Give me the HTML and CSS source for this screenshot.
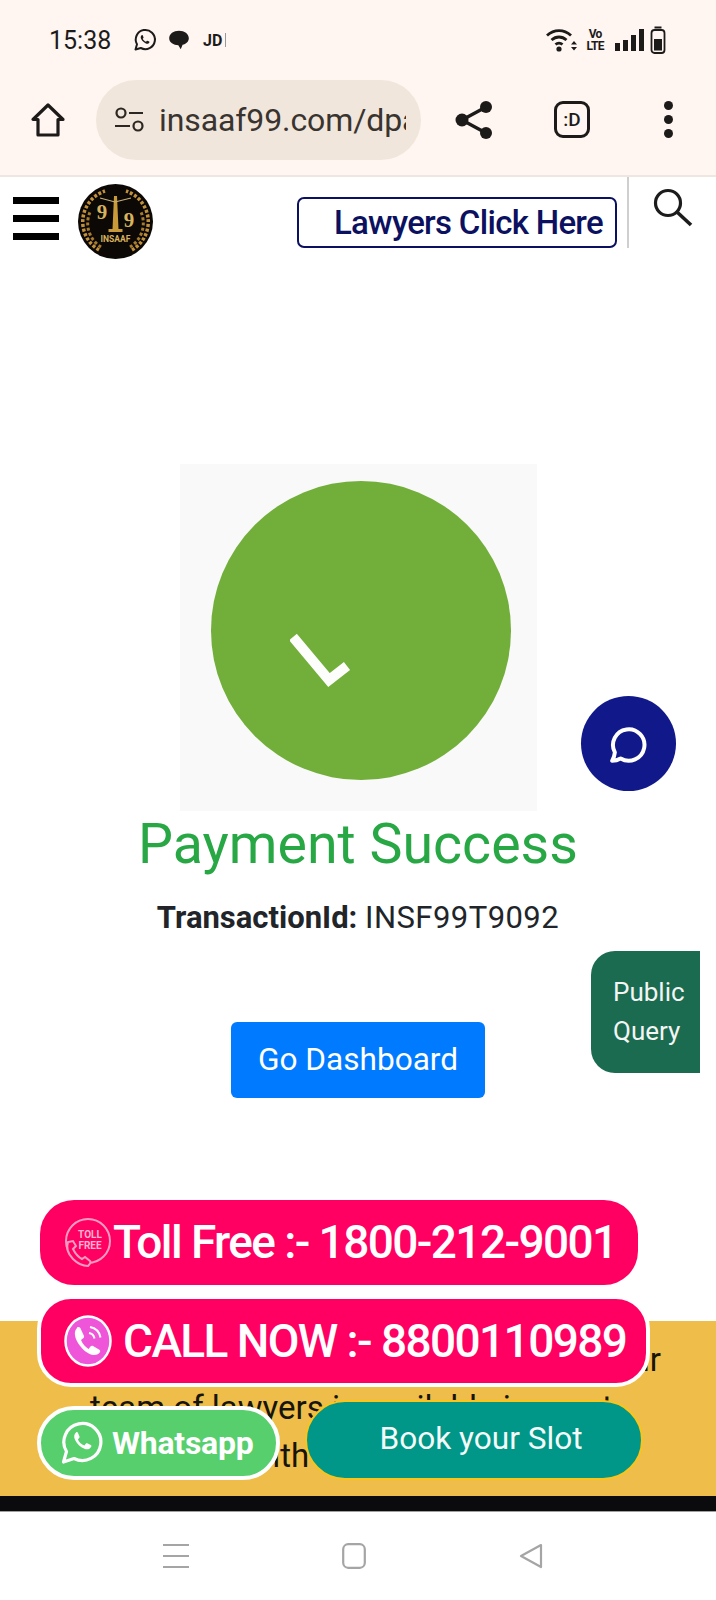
FILE: index.html
```html
<!DOCTYPE html>
<html>

<head>
    <title>Payment Success</title>
    <link rel="stylesheet" href="styles.css">
</head>

<body>
    <div class="screen">
        <div class="status-bar">
            <span class="status-time">15:38</span>
            <svg class="status-app" width="24" height="24" viewBox="0 0 24 24">
                <path d="M2.500 21.500l1.500-5.200A9.600 9.600 0 1 1 7.800 20z" fill="none" stroke="#1d1b1a" stroke-width="2" stroke-linejoin="round" />
                <path d="M8.600 7.200c-1 .9-1.200 2.200-.4 3.900 1 2 2.500 3.500 4.700 4.400 1.500.6 2.800.2 3.500-1 .2-.4.1-.7-.2-.9l-1.800-.9c-.3-.1-.5 0-.7.2l-.7.9c-1.500-.6-2.600-1.700-3.300-3.100l.7-.8c.2-.2.2-.5.1-.7l-.8-1.900c-.2-.4-.6-.4-1-.1z" fill="#1d1b1a" />
            </svg>
            <svg class="status-app" width="24" height="24" viewBox="0 0 22 22">
                <path d="M11 2.500c5 0 9 2.900 9 6.800 0 3.100-2.600 5.400-5.700 6.100l-1.700 4.100-2.200-3.800C6 15.500 2 13.300 2 9.300c0-3.900 4-6.800 9-6.800z" fill="#1d1b1a" />
            </svg>
            <span class="status-jd">JD</span>
            <span class="status-sep"></span>
            <div class="status-right">
                <svg class="status-wifi" width="36" height="26" viewBox="0 0 36 26">
                    <path d="M2 8.500c7-6.500 17-6.500 24 0M6.500 13c4.500-4 10.500-4 15 0M10.500 17.500c2-1.800 5-1.800 7 0" fill="none" stroke="#1d1b1a" stroke-width="2.800" />
                    <circle cx="14" cy="22" r="2.600" fill="#1d1b1a" />
                    <path d="M29 14l3 3.500h-6zM26 20h6l-3 3.500z" fill="#1d1b1a" />
                </svg>
                <span class="status-volte">Vo<br>LTE</span>
                <div class="signal">
                    <span class="signal-bar signal-1"></span>
                    <span class="signal-bar signal-2"></span>
                    <span class="signal-bar signal-3"></span>
                    <span class="signal-bar signal-4"></span>
                </div>
                <svg class="status-battery" width="16" height="28" viewBox="0 0 15 28">
                    <rect x="4" y="0.500" width="7" height="2" fill="#1d1b1a" />
                    <rect x="1" y="4" width="13" height="23" rx="3" fill="none" stroke="#1d1b1a" stroke-width="1.800" />
                    <rect x="3.500" y="13" width="8" height="11.500" fill="#1d1b1a" />
                </svg>
            </div>
        </div>

        <div class="toolbar">
            <svg class="toolbar-home" width="36" height="36" viewBox="0 0 36 36">
                <path d="M18 3L3 17.500h5V33h20V17.500h5z" fill="none" stroke="#1d1b1a" stroke-width="3.200" stroke-linejoin="round" />
            </svg>
            <div class="url-pill">
                <svg width="30" height="26" viewBox="0 0 30 26">
                    <circle cx="7" cy="6" r="4.500" fill="none" stroke="#2b2723" stroke-width="2.200" />
                    <path d="M15 6h14M1 19h15" stroke="#2b2723" stroke-width="2.200" />
                    <circle cx="24" cy="19" r="4.500" fill="none" stroke="#2b2723" stroke-width="2.200" />
                </svg>
                <span class="url-text">insaaf99.com/dpa</span>
            </div>
            <svg class="toolbar-share" width="38" height="40" viewBox="0 0 38 40">
                <path d="M31 7L7 20l24 13" fill="none" stroke="#1d1b1a" stroke-width="3.400" />
                <circle cx="31" cy="7" r="6" fill="#1d1b1a" />
                <circle cx="7" cy="20" r="6.500" fill="#1d1b1a" />
                <circle cx="31" cy="33" r="6" fill="#1d1b1a" />
            </svg>
            <div class="tab-badge">:D</div>
            <div class="toolbar-dots">
                <span class="toolbar-dot"></span>
                <span class="toolbar-dot"></span>
                <span class="toolbar-dot"></span>
            </div>
        </div>

        <div class="site-header">
            <div class="burger">
                <span class="burger-line"></span>
                <span class="burger-line"></span>
                <span class="burger-line"></span>
            </div>
            <svg class="logo" width="75" height="75" viewBox="0 0 75 75">
                <circle cx="37.500" cy="37.500" r="37.500" fill="#0b0806" />
                <path d="M21 66A32.500 32.500 0 0 1 27 7" fill="none" stroke="#c0913a" stroke-width="3.500" stroke-dasharray="3 1.800" />
                <path d="M54 66A32.500 32.500 0 0 0 48 7" fill="none" stroke="#c0913a" stroke-width="3.500" stroke-dasharray="3 1.800" />
                <path d="M23 63A28 28 0 0 1 12 28" fill="none" stroke="#a87c2c" stroke-width="3" stroke-dasharray="3 2.200" />
                <path d="M52 63A28 28 0 0 0 63 28" fill="none" stroke="#a87c2c" stroke-width="3" stroke-dasharray="3 2.200" />
                <path d="M36 12h3l1.500 33h4v3h-14v-3h4z" fill="#c99a3a" />
                <path d="M22 14l15 4 16-4" fill="none" stroke="#c9b27a" stroke-width="1.200" />
                <text class="logo-nine" x="24" y="35">9</text>
                <text class="logo-nine" x="51" y="43">9</text>
                <text class="logo-name" x="37.500" y="58">INSAAF</text>
            </svg>
            <a class="lawyers-button">Lawyers Click Here</a>
            <span class="header-divider"></span>
            <svg class="search-icon" width="42" height="40" viewBox="0 0 42 40">
                <circle cx="16" cy="15" r="12.500" fill="none" stroke="#1c1c1c" stroke-width="3.200" />
                <path d="M25 24l14 13" stroke="#1c1c1c" stroke-width="3.600" />
            </svg>
        </div>

        <main class="content">
            <div class="success-image">
                <div class="success-circle">
                    <svg width="62" height="56" viewBox="0 0 62 56">
                        <path d="M3 3l36 43 18-14" fill="none" stroke="#fdfdfb" stroke-width="10" />
                    </svg>
                </div>
            </div>
            <h1 class="success-title">Payment Success</h1>
            <p class="transaction"><b class="transaction-label">TransactionId:</b> <span class="transaction-id">INSF99T9092</span></p>
            <a class="dashboard-button">Go Dashboard</a>
        </main>

        <footer class="footer-band">
            <p class="footer-line footer-line-first">Get in touch with us now and talk to our</p>
            <p class="footer-line footer-line-second">team of lawyers is available in most</p>
            <p class="footer-line footer-line-third">Connect with our legal team now</p>
        </footer>
        <div class="footer-black"></div>

        <nav class="nav-bar">
            <svg width="26" height="26" viewBox="0 0 26 26">
                <path d="M0 2h26M0 13h26M0 24h26" stroke="#a5a5a5" stroke-width="2.200" />
            </svg>
            <svg width="24" height="26" viewBox="0 0 24 26">
                <rect x="1.200" y="1.200" width="21.600" height="23.600" rx="5" fill="none" stroke="#a5a5a5" stroke-width="2.200" />
            </svg>
            <svg width="24" height="26" viewBox="0 0 24 26">
                <path d="M22 2L2 13l20 11z" fill="none" stroke="#a5a5a5" stroke-width="2.200" stroke-linejoin="round" />
            </svg>
        </nav>

        <a class="chat-button">
            <svg width="44" height="44" viewBox="0 0 42 42">
                <path d="M5 37c2 0 5-.5 8-2.200A15 15 0 1 0 7.500 29c-.2 2.500-1 5-2.500 8z" fill="none" stroke="#fff" stroke-width="3.800" stroke-linejoin="round" />
            </svg>
        </a>

        <a class="public-query">Public<br>Query</a>

        <div class="call-stack">
            <a class="call-pill toll-pill">
                <svg class="pill-icon" width="48" height="52" viewBox="0 0 48 52">
                    <circle cx="25" cy="25" r="22" fill="none" stroke="#ff9cc0" stroke-width="2" />
                    <text class="toll-icon-text" x="27" y="22">TOLL</text>
                    <text class="toll-icon-text" x="27" y="33">FREE</text>
                    <path d="M5 26c-2 6 0 12 5 17s10 7 15 7c2-2 3-4 2-5l-5-4-3 2c-4-2-7-6-9-10l3-3-3-5z" fill="#ff0062" stroke="#ff9cc0" stroke-width="2" />
                </svg>
                <span class="toll-text">Toll Free :- 1800-212-9001</span>
            </a>
            <a class="call-pill now-pill">
                <svg class="pill-icon" width="48" height="52" viewBox="0 0 48 52">
                    <ellipse cx="24" cy="26" rx="22.500" ry="24.500" fill="#ee55d8" stroke="#fff" stroke-width="2.500" />
                    <path d="M13 13c-3 3-3 8 1 15 4 6 9 11 15 12 3 .5 6-1 7-3 .5-1 0-2-1-2.500l-6-3.500c-1-.5-2-.3-2.500.5l-2 2.500c-3-2-6-5-7.500-9l2.500-2c.7-.7.8-1.700.3-2.500l-3.500-7.500c-.7-1-2-1.200-3.300-.5z" fill="#fff" />
                    <path d="M25 18c3 .5 5 2.500 5.500 5.500M26 12c5.500 1 9.500 5 10.500 10.500" fill="none" stroke="#fff" stroke-width="2" />
                </svg>
                <span class="now-text">CALL NOW :- 8800110989</span>
            </a>
            <div class="action-row">
                <a class="whatsapp-pill">
                    <svg class="pill-icon" width="42" height="44" viewBox="0 0 42 44">
                        <path d="M2.500 41l3-10.500A18.500 18.500 0 1 1 13 37.500z" fill="none" stroke="#fff" stroke-width="3.200" stroke-linejoin="round" />
                        <path d="M15 11.500c-2 1.800-2.400 4.300-.9 7.500 2 4 5 7 9.300 8.800 3 1.200 5.500.4 6.800-2 .4-.7.200-1.300-.4-1.700l-3.600-1.800c-.6-.2-1-.1-1.400.4l-1.400 1.800c-3-1.200-5.200-3.300-6.500-6.100l1.400-1.600c.4-.4.4-1 .2-1.400l-1.600-3.700c-.4-.8-1.200-.8-1.900-.2z" fill="#fff" />
                    </svg>
                    <span class="whatsapp-text">Whatsapp</span>
                </a>
                <a class="book-pill">Book your Slot</a>
            </div>
        </div>
    </div>
</body>

</html>
```

FILE: styles.css
```css
:root {
    --pill-pink: #ff0062;
    --chrome-bg: #fff6f2;
    --chrome-ink: #1d1b1a;
}

* {
    box-sizing: border-box;
}

body {
    margin: 0;
    font-family: Roboto, "Liberation Sans", sans-serif;
    background: #fff;
}

p {
    margin: 0;
}

.screen {
    position: relative;
    width: 716px;
    height: 1600px;
    overflow: hidden;
}

/* phone status bar */

.status-bar {
    display: flex;
    align-items: center;
    height: 66px;
    padding: 14px 50px 0 49px;
    background: var(--chrome-bg);
    color: var(--chrome-ink);
}

.status-time {
    font-size: 25px;
    width: 84px;
}

.status-app {
    margin-right: 10px;
}

.status-jd {
    font-size: 16px;
    font-weight: 700;
    margin-left: 2px;
}

.status-sep {
    width: 1px;
    height: 14px;
    margin-left: 3px;
    background: #999;
}

.status-right {
    display: flex;
    align-items: center;
    gap: 9px;
    margin-left: auto;
}

.status-wifi {
    margin-right: -4px;
}

.status-volte {
    font-size: 12px;
    font-weight: 700;
    line-height: 12px;
    letter-spacing: -.6px;
    text-align: center;
}

.signal {
    display: flex;
    align-items: flex-end;
    gap: 3px;
    height: 22px;
    margin-left: 2px;
}

.signal-bar {
    width: 5px;
    background: var(--chrome-ink);
}

.signal-1 {
    height: 8px;
}

.signal-2 {
    height: 11px;
}

.signal-3 {
    height: 16px;
}

.signal-4 {
    height: 22px;
}

.status-battery {
    margin-left: -3px;
}

/* browser toolbar */

.toolbar {
    display: flex;
    align-items: center;
    height: 111px;
    padding: 0 0 2px 30px;
    background: var(--chrome-bg);
    border-bottom: 2px solid #efe6e0;
}

.toolbar-home {
    flex: none;
}

.url-pill {
    display: flex;
    align-items: center;
    gap: 15px;
    width: 325px;
    height: 80px;
    margin-left: 30px;
    padding: 0 15px 0 18px;
    border-radius: 40px;
    background: #f0e6dc;
}

.url-pill svg {
    flex: none;
}

.url-text {
    flex: 1;
    min-width: 0;
    font-size: 32px;
    letter-spacing: -.1px;
    color: #39342f;
    white-space: nowrap;
    overflow: hidden;
}

.toolbar-share {
    flex: none;
    margin-left: 34px;
}

.tab-badge {
    width: 36px;
    height: 37px;
    margin-left: 61px;
    border: 3px solid var(--chrome-ink);
    border-radius: 9px;
    font-size: 19px;
    font-weight: 500;
    line-height: 31px;
    text-align: center;
    color: var(--chrome-ink);
}

.toolbar-dots {
    display: flex;
    flex-direction: column;
    gap: 5px;
    margin-left: 74px;
}

.toolbar-dot {
    width: 9px;
    height: 9px;
    border-radius: 50%;
    background: var(--chrome-ink);
}

/* site header */

.site-header {
    display: flex;
    align-items: flex-start;
    height: 88px;
}

.burger {
    display: flex;
    flex-direction: column;
    gap: 11px;
    width: 46px;
    margin: 20px 0 0 13px;
}

.burger-line {
    height: 7px;
    background: #000;
}

.logo {
    flex: none;
    margin: 7px 0 0 19px;
}

.logo-nine {
    font-family: "Liberation Serif", serif;
    font-size: 21px;
    font-weight: 700;
    fill: #d8b25c;
    text-anchor: middle;
}

.logo-name {
    font-size: 8.500px;
    font-weight: 700;
    fill: #d8b25c;
    text-anchor: middle;
}

.lawyers-button {
    width: 320px;
    height: 51px;
    margin: 20px 0 0 144px;
    padding-right: 12px;
    border: 2px solid #0b1160;
    border-radius: 7px;
    font-size: 33px;
    font-weight: 500;
    letter-spacing: -.7px;
    line-height: 47px;
    text-align: right;
    white-space: nowrap;
    color: #0b1160;
}

.header-divider {
    width: 2px;
    height: 71px;
    margin-left: 10px;
    background: #cfcfcf;
}

.search-icon {
    flex: none;
    margin: 11px 0 0 23px;
}

/* payment result */

.content {
    display: flex;
    flex-direction: column;
    align-items: center;
    height: 1056px;
    padding-top: 199px;
}

.success-image {
    display: flex;
    justify-content: center;
    width: 357px;
    height: 347px;
    padding-top: 17px;
    background: #f8f9f8;
}

.success-circle {
    display: flex;
    align-items: flex-start;
    width: 300px;
    height: 299px;
    margin-left: 6px;
    padding: 153px 0 0 79px;
    border-radius: 50%;
    background: #72ae3a;
}

.success-title {
    margin: 0;
    font-size: 55.500px;
    font-weight: 400;
    line-height: 67px;
    color: #28a745;
}

.transaction {
    margin-top: 22px;
    font-size: 31px;
    line-height: 36px;
    color: #212529;
}

.transaction-label {
    font-weight: 700;
}

.transaction-id {
    letter-spacing: .45px;
}

.dashboard-button {
    width: 254px;
    height: 76px;
    margin-top: 86px;
    border-radius: 6px;
    background: #007bff;
    font-size: 31.600px;
    line-height: 75px;
    text-align: center;
    color: #fff;
}

/* footer */

.footer-band {
    height: 175px;
    padding-top: 15px;
    background: #eebd4a;
}

.footer-line {
    font-size: 33px;
    line-height: 48px;
    white-space: nowrap;
    color: #17140c;
}

.footer-line-first {
    width: 661px;
    text-align: right;
}

.footer-line-second {
    padding-left: 90px;
}

.footer-line-third {
    padding-left: 117px;
}

.footer-black {
    height: 16px;
    background: #0b0a0d;
    border-bottom: 1px solid #a0a0a0;
}

.nav-bar {
    display: flex;
    align-items: flex-start;
    gap: 153px;
    height: 88px;
    padding: 31px 0 0 163px;
}

/* floating items */

.chat-button {
    position: absolute;
    top: 696px;
    left: 581px;
    display: flex;
    align-items: center;
    justify-content: center;
    width: 95px;
    height: 95px;
    border-radius: 50%;
    background: #10188a;
}

.public-query {
    position: absolute;
    top: 951px;
    left: 591px;
    width: 109px;
    height: 122px;
    padding: 22px 0 0 22px;
    border-radius: 24px 0 0 24px;
    background: #1a6b4f;
    font-size: 26px;
    line-height: 39px;
    color: #f4f4f4;
}

.call-stack {
    position: absolute;
    top: 1200px;
    left: 37px;
    display: flex;
    flex-direction: column;
    align-items: flex-start;
}

.call-pill {
    display: flex;
    align-items: center;
    border-radius: 34px;
    background: var(--pill-pink);
    color: #fff;
    white-space: nowrap;
}

.pill-icon {
    flex: none;
}

.toll-pill {
    width: 598px;
    height: 85px;
    margin-left: 3px;
    padding: 0 0 2px 23px;
}

.toll-icon-text {
    font-size: 10px;
    font-weight: 700;
    fill: #ffb4cf;
    text-anchor: middle;
}

.toll-text {
    margin-left: 2px;
    font-size: 46px;
    font-weight: 500;
    letter-spacing: -1.600px;
}

.now-pill {
    width: 613px;
    height: 92px;
    margin-top: 10px;
    padding-left: 23px;
    border: 4px solid #fff;
}

.now-text {
    margin-left: 11px;
    font-size: 46px;
    font-weight: 500;
    letter-spacing: -1.600px;
}

.action-row {
    display: flex;
    align-items: flex-start;
    margin-top: 13px;
}

.whatsapp-pill {
    display: flex;
    align-items: center;
    gap: 9px;
    width: 243px;
    height: 74px;
    margin-top: 6px;
    padding-left: 20px;
    border: 4px solid #fff;
    border-radius: 37px;
    background: #56cf6c;
    color: #fff;
}

.whatsapp-text {
    font-size: 32px;
    font-weight: 700;
    letter-spacing: -.25px;
}

.book-pill {
    width: 338px;
    height: 80px;
    margin-left: 25px;
    padding-left: 14px;
    border: 2px solid #fcc419;
    border-radius: 40px;
    background: #009688;
    font-size: 31.600px;
    line-height: 74px;
    text-align: center;
    color: #f4fbf9;
}
```
